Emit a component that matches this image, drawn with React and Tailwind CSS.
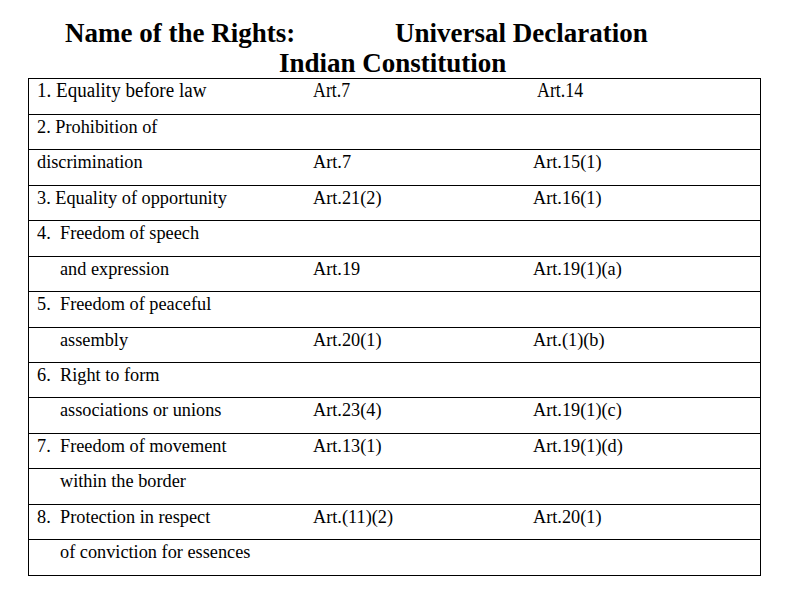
import React from 'react';

const rows = [
  { h: 'h-[36px]', first: true, label: '1. Equality before law', a: 'Art.7', b: 'Art.14' },
  { h: 'h-[35px]', label: '2. Prohibition of' },
  { h: 'h-[36px]', label: 'discrimination', a: 'Art.7', b: 'Art.15(1)' },
  { h: 'h-[35px]', label: '3. Equality of opportunity', a: 'Art.21(2)', b: 'Art.16(1)' },
  { h: 'h-[36px]', num: '4.', label: 'Freedom of speech' },
  { h: 'h-[35px]', num: '', label: 'and expression', a: 'Art.19', b: 'Art.19(1)(a)' },
  { h: 'h-[36px]', num: '5.', label: 'Freedom of peaceful' },
  { h: 'h-[35px]', num: '', label: 'assembly', a: 'Art.20(1)', b: 'Art.(1)(b)' },
  { h: 'h-[35px]', num: '6.', label: 'Right to form' },
  { h: 'h-[36px]', num: '', label: 'associations or unions', a: 'Art.23(4)', b: 'Art.19(1)(c)' },
  { h: 'h-[35px]', num: '7.', label: 'Freedom of movement', a: 'Art.13(1)', b: 'Art.19(1)(d)' },
  { h: 'h-[36px]', num: '', label: 'within the border' },
  { h: 'h-[35px]', num: '8.', label: 'Protection in respect', a: 'Art.(11)(2)', b: 'Art.20(1)' },
  { h: 'h-[35px]', num: '', label: 'of conviction for essences' },
];

const Row = ({ row, last }) => {
  if (row.first) {
    // first row is set in a taller, narrower face
    return (
      <div className={`${row.h} grid grid-cols-[284px_224px_1fr] border-b border-black text-[20.5px] leading-[22px]`}>
        <div className="pl-[8px] whitespace-nowrap">
          <span className="inline-block origin-left scale-x-[0.93]">{row.label}</span>
        </div>
        <div className="whitespace-nowrap">
          <span className="inline-block origin-left scale-x-[0.87]">{row.a}</span>
        </div>
        <div className="whitespace-nowrap">
          <span className="inline-block origin-left scale-x-[0.87]">{row.b}</span>
        </div>
      </div>
    );
  }

  return (
    <div className={`${row.h} grid grid-cols-[284px_220px_1fr] ${last ? '' : 'border-b border-black'} text-[18.3px] leading-[20px] pt-[2px]`}>
      <div className="pl-[8px] whitespace-nowrap flex">
        {row.num !== undefined && <span className="w-[23px] shrink-0">{row.num}</span>}
        <span>{row.label}</span>
      </div>
      <div className="whitespace-nowrap">{row.a}</div>
      <div className="whitespace-nowrap">{row.b}</div>
    </div>
  );
};

const App = () => {
  return (
    <div
      className="w-[811px] h-[601px] bg-white text-black pt-[18px] overflow-hidden"
      style={{ fontFamily: '"Liberation Serif", "Times New Roman", serif' }}
    >
      {/* Heading */}
      <div className="text-[27px] font-bold leading-[30px]">
        <div className="pl-[65px] flex whitespace-nowrap">
          <span className="w-[330px]">Name of the Rights:</span>
          <span>Universal Declaration</span>
        </div>
        <div className="pl-[279px] whitespace-nowrap">Indian Constitution</div>
      </div>

      {/* Table */}
      <div className="ml-[28px] w-[733px] border border-black">
        {rows.map((row, i) => (
          <Row key={i} row={row} last={i === rows.length - 1} />
        ))}
      </div>
    </div>
  );
};

export default App;
